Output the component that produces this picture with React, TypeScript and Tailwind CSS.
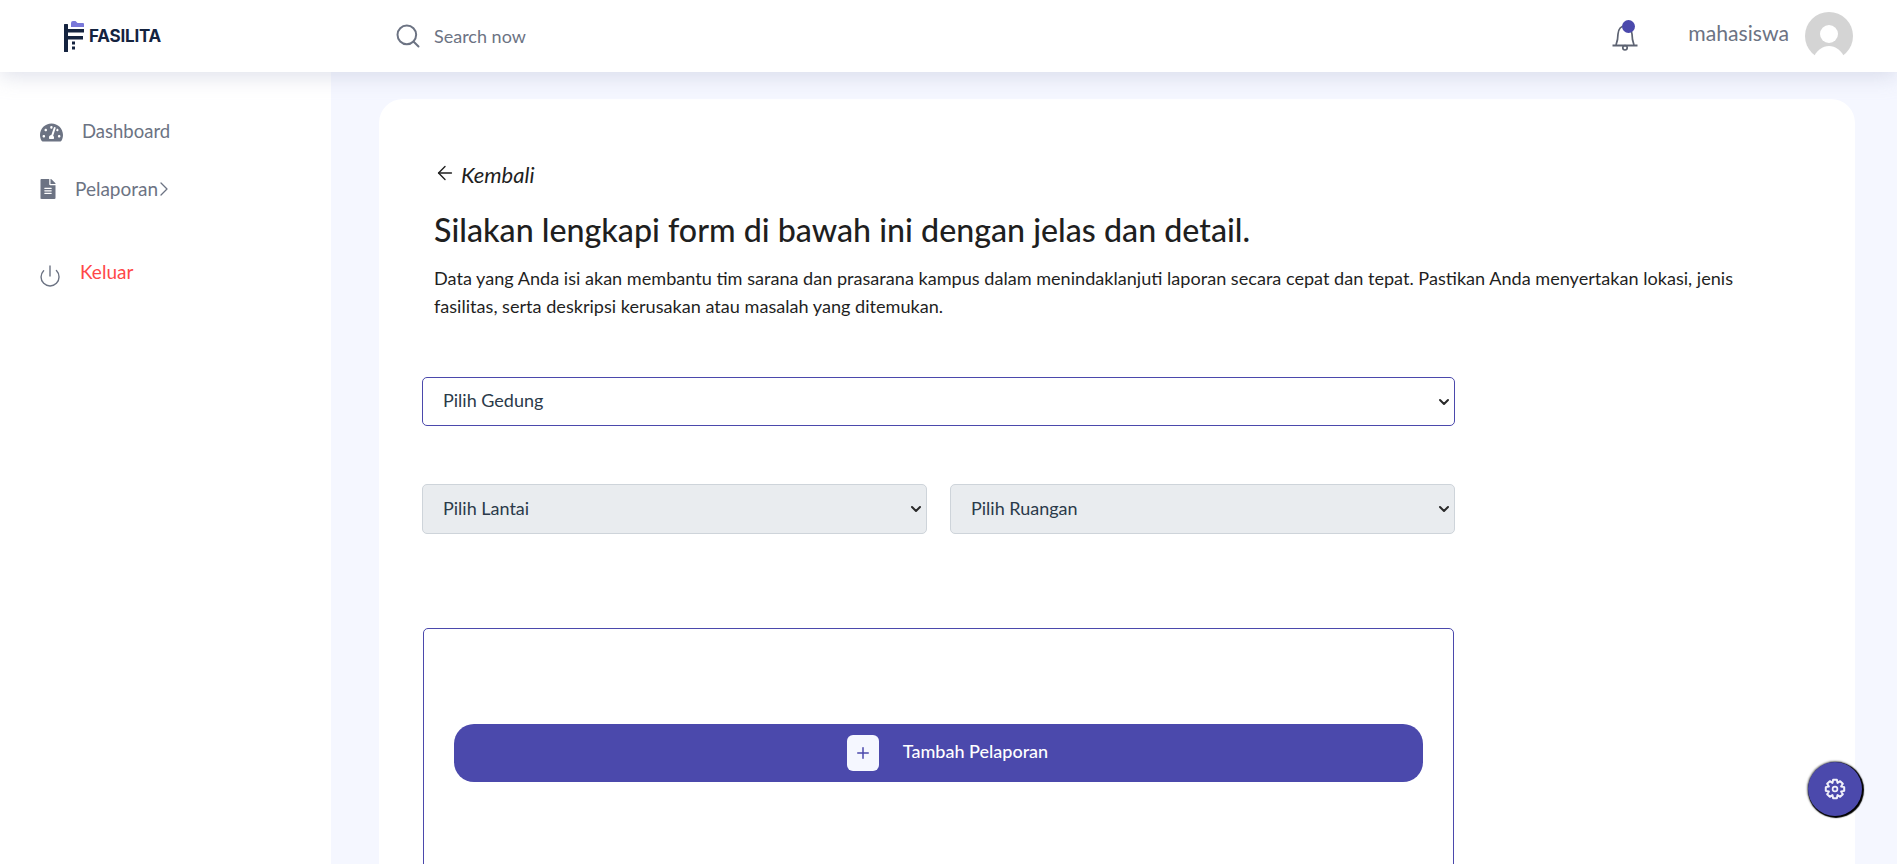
import { Search, Power, ChevronRight, ChevronDown, ArrowLeft, Plus } from "lucide-react";
import { FaTachometerAlt, FaFileAlt } from "react-icons/fa";

const font = { fontFamily: '"Lato", "Noto Sans", sans-serif' };

function Logo() {
  return (
    <div className="flex items-center gap-[4px]">
      <svg width="22" height="32" viewBox="0 0 22 32">
        <path d="M8 7 V3 Q8 1 10 1 H12.5 L14.5 3 H20 Q21 3 21 4 V7 Z" fill="#7978d9" />
        <rect x="1" y="4" width="4" height="28" rx="0.5" fill="#14233f" />
        <rect x="5" y="9" width="16" height="3.5" fill="#14233f" />
        <rect x="5" y="16" width="15" height="3.5" fill="#14233f" />
        <rect x="9" y="21.5" width="3" height="3" fill="#14233f" />
        <rect x="9" y="26.5" width="3" height="3" fill="#14233f" />
      </svg>
      <span className="mt-[2px] text-[17px] font-bold tracking-[-0.2px] text-[#14233f] [font-family:Inter,sans-serif]">FASILITA</span>
    </div>
  );
}

function BellIcon() {
  return (
    <svg width="26" height="30" viewBox="0 0 26 30" fill="none" stroke="#5d6372" strokeWidth="1.7">
      <path d="M4 24 C5.5 20 6 16 6 13 C6.5 8 9 5 13 5 C17 5 19.5 8 20 13 C20 16 20.5 20 22 24" />
      <path d="M0.5 24.5 H25.5" strokeWidth="2" />
      <circle cx="13" cy="26.8" r="2.2" />
    </svg>
  );
}

function GearIcon() {
  const pts: string[] = [];
  for (let i = 0; i < 8; i++) {
    const a = (i * Math.PI) / 4 - Math.PI / 2;
    const corners: [number, number][] = [
      [-0.39, 6.6],
      [-0.2, 9.4],
      [0.2, 9.4],
      [0.39, 6.6],
    ];
    for (const [d, r] of corners) {
      pts.push(`${(11 + r * Math.cos(a + d)).toFixed(2)},${(11 + r * Math.sin(a + d)).toFixed(2)}`);
    }
  }
  return (
    <svg width="22" height="22" viewBox="0 0 22 22" fill="none" stroke="#f0f0fa" strokeWidth="2" strokeLinejoin="round">
      <polygon points={pts.join(" ")} />
      <circle cx="11" cy="11" r="2.4" strokeWidth="1.7" />
    </svg>
  );
}

function Select({ label, className = "" }: { label: string; className?: string }) {
  return (
    <div className="relative flex-1">
      <select className={`w-full appearance-none rounded-[5px] border pb-[2px] pl-[20px] text-[18px] text-[#2b3a4a] ${className}`} style={font} defaultValue={label}>
        <option>{label}</option>
      </select>
      <ChevronDown size={16} strokeWidth={3} className="pointer-events-none absolute right-[3px] top-1/2 -translate-y-1/2 text-[#2a2a2a]" />
    </div>
  );
}

export default function App() {
  return (
    <div className="flex h-screen flex-col overflow-hidden bg-[#f5f7ff]" style={font}>
      <header className="relative z-10 flex h-[72px] shrink-0 items-center bg-white pl-[63px] pr-[44px] shadow-[0_4px_20px_rgba(182,186,208,0.45)]">
        <div className="w-[331px]">
          <Logo />
        </div>
        <div className="flex items-center gap-[12px] text-[#6c7383]">
          <Search size={28} strokeWidth={1.7} />
          <span className="text-[18px]">Search now</span>
        </div>
        <div className="ml-auto flex items-center">
          <div className="relative mr-[50px]">
            <BellIcon />
            <span className="absolute -top-[1px] left-[10px] h-[13px] w-[13px] rounded-full bg-[#4b49ac]" />
          </div>
          <span className="mb-[5px] mr-[16px] text-[21.2px] text-[#6c7383]">mahasiswa</span>
          <svg width="48" height="48" viewBox="0 0 48 48">
            <circle cx="24" cy="24" r="24" fill="#d4d4d4" />
            <circle cx="24" cy="22" r="9" fill="#fff" />
            <path d="M8 47 C 11 38, 18 34, 24 34 C 30 34, 37 38, 40 47 A 24 24 0 0 1 8 47 Z" fill="#fff" />
          </svg>
        </div>
      </header>

      <div className="flex min-h-0 flex-1">
        <aside className="w-[331px] shrink-0 bg-white pl-[40px] pt-[49px] text-[#6c7383]">
          <div className="flex h-[22px] items-center">
            <FaTachometerAlt size={23} />
            <span className="ml-[19px] text-[18.5px]">Dashboard</span>
          </div>
          <div className="mt-[35px] flex h-[22px] items-center">
            <FaFileAlt size={20} className="-ml-[2.5px]" />
            <span className="ml-[17.5px] text-[19px]">Pelaporan</span>
            <ChevronRight size={24} strokeWidth={1.3} className="-ml-[6px]" />
          </div>
          <div className="mt-[61px] flex items-start">
            <Power size={24} strokeWidth={1.4} className="-ml-[2px] mt-[3px]" />
            <span className="ml-[18px] text-[19px] leading-[22px] text-[#ff4747]">Keluar</span>
          </div>
        </aside>

        <main className="min-w-0 flex-1 pl-[48px] pr-[42px] pt-[27px]">
          <div className="h-[900px] rounded-[24px] bg-white pl-[43px] pr-[40px] pt-[62px]">
            <div className="ml-[12px]">
              <div className="flex items-center gap-[5px] text-[#1f1f1f]">
                <ArrowLeft size={22} strokeWidth={1.5} className="-mt-[4px]" />
                <span className="text-[22px] italic leading-[28px]">Kembali</span>
              </div>
              <h1 className="mt-[21px] text-[32.2px] font-medium leading-[40px] text-[#1f1f1f]">
                Silakan lengkapi form di bawah ini dengan jelas dan detail.
              </h1>
              <p className="mt-[14px] w-[1320px] text-[18.1px] leading-[28px] text-[#1f1f1f]">
                Data yang Anda isi akan membantu tim sarana dan prasarana kampus dalam menindaklanjuti laporan secara cepat dan tepat. Pastikan Anda menyertakan lokasi, jenis fasilitas, serta deskripsi kerusakan atau masalah yang ditemukan.
              </p>
            </div>

            <div className="mt-[57px] flex w-[1033px] flex-col">
              <Select label="Pilih Gedung" className="h-[49px] border-[#4b49ac] bg-white" />
              <div className="mt-[58px] flex gap-[23px]">
                <Select label="Pilih Lantai" className="h-[50px] border-[#ced4da] bg-[#e9ecef]" />
                <Select label="Pilih Ruangan" className="h-[50px] border-[#ced4da] bg-[#e9ecef]" />
              </div>
              <div className="ml-[1px] mt-[94px] h-[400px] w-[1031px] rounded-[5px] border border-[#4b49ac] px-[30px] pt-[95px]">
                <button className="flex h-[58px] w-full items-center justify-center rounded-[20px] bg-[#4b49ac] pl-[18px] text-white">
                  <span className="flex h-[36px] w-[32px] items-center justify-center rounded-[6px] bg-[#f5f7ff] text-[#4b49ac]">
                    <Plus size={18} strokeWidth={2} />
                  </span>
                  <span className="mb-[4px] ml-[24px] text-[18px] font-medium">Tambah Pelaporan</span>
                </button>
              </div>
            </div>
          </div>
        </main>
      </div>

      <button className="fixed bottom-[48px] right-[35px] flex h-[54px] w-[54px] items-center justify-center rounded-full bg-[#4b49ac] shadow-[1px_1px_1px_1px_#000,0_0_2px_1px_#777]">
        <GearIcon />
      </button>
    </div>
  );
}
